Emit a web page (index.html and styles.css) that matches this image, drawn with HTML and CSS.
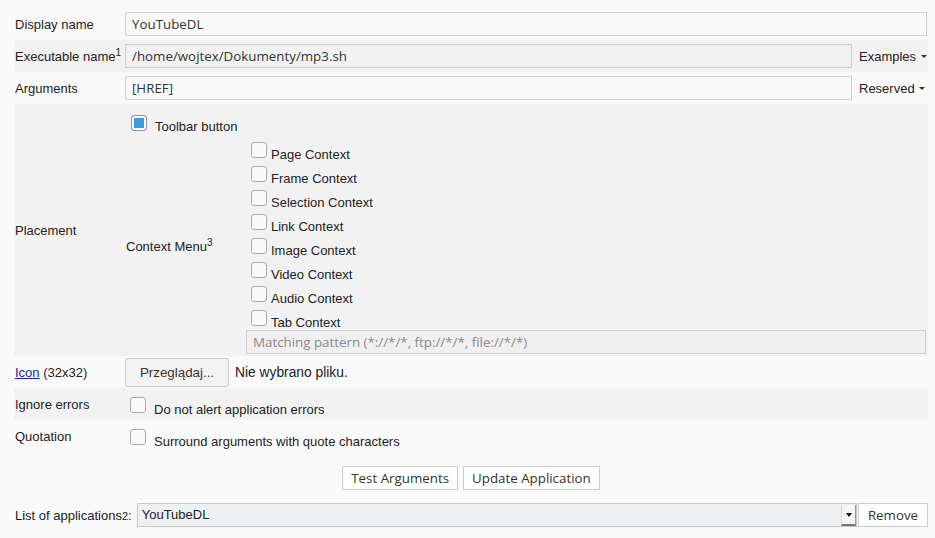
FILE: index.html
```
<!DOCTYPE html>
<html>
<head>
	<meta charset="utf-8">
	<link rel="stylesheet" href="styles.css">
</head>
<body>
	<table class="form">
		<colgroup>
			<col class="col-label">
			<col>
			<col class="col-extra">
		</colgroup>
		<tr>
			<td class="label">Display name</td>
			<td colspan="2"><input type="text" class="text wide" value="YouTubeDL"></td>
		</tr>
		<tr class="alt">
			<td class="label">Executable name<sup>1</sup></td>
			<td><input type="text" class="text" value="/home/wojtex/Dokumenty/mp3.sh"></td>
			<td class="menu">Examples <span class="caret"></span></td>
		</tr>
		<tr>
			<td class="label">Arguments</td>
			<td><input type="text" class="text" value="[HREF]"></td>
			<td class="menu">Reserved <span class="caret"></span></td>
		</tr>
		<tr class="alt">
			<td class="label">Placement</td>
			<td colspan="2" class="placement">
				<label class="check toolbar"><input type="checkbox" checked><span>Toolbar button</span></label>
				<div class="context">
					<div class="context-label">Context Menu<sup>3</sup></div>
					<div class="context-list">
						<label class="check small"><input type="checkbox"><span>Page Context</span></label>
						<label class="check small"><input type="checkbox"><span>Frame Context</span></label>
						<label class="check small"><input type="checkbox"><span>Selection Context</span></label>
						<label class="check small"><input type="checkbox"><span>Link Context</span></label>
						<label class="check small"><input type="checkbox"><span>Image Context</span></label>
						<label class="check small"><input type="checkbox"><span>Video Context</span></label>
						<label class="check small"><input type="checkbox"><span>Audio Context</span></label>
						<label class="check small"><input type="checkbox"><span>Tab Context</span></label>
						<input type="text" class="text pattern" placeholder="Matching pattern (*://*/*, ftp://*/*, file://*/*)">
					</div>
				</div>
			</td>
		</tr>
		<tr>
			<td class="label"><a href="#">Icon</a> (32x32)</td>
			<td colspan="2">
				<div class="file">
					<button class="browse">Przeglądaj...</button>
					<span class="file-name">Nie wybrano pliku.</span>
				</div>
			</td>
		</tr>
		<tr class="alt">
			<td class="label">Ignore errors</td>
			<td colspan="2"><label class="check option"><input type="checkbox"><span>Do not alert application errors</span></label></td>
		</tr>
		<tr>
			<td class="label">Quotation</td>
			<td colspan="2"><label class="check option"><input type="checkbox"><span>Surround arguments with quote characters</span></label></td>
		</tr>
	</table>

	<div class="actions">
		<button class="plain">Test Arguments</button>
		<button class="plain">Update Application</button>
	</div>

	<div class="apps">
		<span class="apps-label">List of applications<small>2</small>:</span>
		<div class="combo">
			<span class="combo-value">YouTubeDL</span>
			<span class="combo-arrow"></span>
		</div>
		<button class="plain remove">Remove</button>
	</div>
</body>
</html>
```

FILE: styles.css
```
html, body {
	margin: 0;
	padding: 0;
	background: #fafafa;
	color: #222;
	font-family: "Liberation Sans", Arial, sans-serif;
	font-size: 13px;
}

body {
	padding: 8px 7px 0 14px;
	width: 914px;
}

.form {
	width: 914px;
	border-collapse: collapse;
	border-spacing: 0;
}
.col-label { width: 111px; }
.col-extra { width: 76px; }

.form tr { height: 32px; }
.form tr.alt { background: #f2f2f2; }
.form td {
	padding: 0;
	vertical-align: middle;
}
td.label {
	padding-left: 1px;
	white-space: nowrap;
}
sup {
	font-size: 10px;
	vertical-align: 5px;
	line-height: 0;
}
a { color: #1a1aa6; }

.text {
	box-sizing: border-box;
	width: 100%;
	height: 24px;
	margin: 0;
	padding: 0 6px;
	border: 1px solid #cfcfcf;
	background: transparent;
	color: #333;
	font-family: "Open Sans", sans-serif;
	font-size: 13.33px;
	outline: none;
}
.text.wide { width: calc(100% - 1px); }
.text::placeholder { color: #8a8a8a; }

.menu {
	padding-left: 7px !important;
	white-space: nowrap;
}
.caret {
	display: inline-block;
	width: 0;
	height: 0;
	margin-left: 1px;
	vertical-align: 3px;
	border-left: 3px solid transparent;
	border-right: 3px solid transparent;
	border-top: 3px solid #333;
}

/* checkboxes */
.check {
	display: flex;
	align-items: flex-start;
}
.check input {
	appearance: none;
	-webkit-appearance: none;
	box-sizing: border-box;
	flex: none;
	width: 16px;
	height: 16px;
	margin: 0;
	border: 1px solid #a9a9a9;
	border-radius: 3px;
	background: #fafafa;
}
.check input:checked {
	border-color: #8c9aa5;
	background: #3a9de2;
	box-shadow: inset 0 0 0 2px #fff;
}
.check span {
	margin: 4px 0 0 8px;
	line-height: 16px;
	white-space: nowrap;
}
.check.small span {
	margin: 5px 0 0 4px;
}

.placement {
	padding: 0 0 2px 0 !important;
}
.toolbar {
	padding: 11px 0 0 6px;
}
.context {
	display: grid;
	grid-template-columns: 121px 1fr;
	margin-top: 7px;
}
.context-label {
	align-self: center;
	padding-left: 1px;
	margin-top: -3px;
}
.context-list {
	display: flex;
	flex-direction: column;
	gap: 8px;
}
.context-list .check {
	height: 16px;
	padding-left: 5px;
}
.pattern {
	width: 680px;
	margin-top: -4px;
	background: #f0f0f0;
}

/* file picker */
.file {
	display: flex;
	align-items: center;
}
.browse {
	width: 104px;
	height: 29px;
	margin: 0 6px 0 0;
	border: 1px solid #c9c9c9;
	border-radius: 3px;
	background: #f3f3f3;
	color: #333;
	font-family: "Liberation Sans", Arial, sans-serif;
	font-size: 13.33px;
}
.file-name { font-size: 13.8px; }

.option {
	padding: 6px 0 0 5px;
}
.option span { margin-top: 5px; }

/* bottom controls */
.actions {
	display: flex;
	justify-content: center;
	gap: 5px;
	margin-top: 14px;
}
.plain {
	height: 24px;
	padding: 0 8px;
	border: 1px solid #cccccc;
	background: #fff;
	color: #333;
	font-family: "Open Sans", sans-serif;
	font-size: 13.33px;
}

.apps {
	display: flex;
	align-items: center;
	margin-top: 13px;
}
.apps-label {
	padding-left: 1px;
	margin-right: 5px;
	white-space: nowrap;
}
.apps-label small { font-size: 11px; }
.combo {
	flex: 1;
	display: flex;
	box-sizing: border-box;
	height: 24px;
	border: 1px solid #c6c6c6;
	background: #eef0f1;
}
.combo-value {
	flex: 1;
	padding-left: 4px;
	line-height: 22px;
}
.combo-arrow {
	position: relative;
	box-sizing: border-box;
	width: 15px;
	margin: 1px 0 0;
	border-left: 1px solid #d8d8d8;
	border-bottom: 2px solid #777;
	border-right: 1px solid #999;
	background: #f4f4f4;
}
.combo-arrow::after {
	content: "";
	position: absolute;
	left: 4px;
	top: 8px;
	border-left: 3px solid transparent;
	border-right: 3px solid transparent;
	border-top: 4px solid #111;
}
.remove {
	width: 70px;
	margin-left: 1px;
}
```
